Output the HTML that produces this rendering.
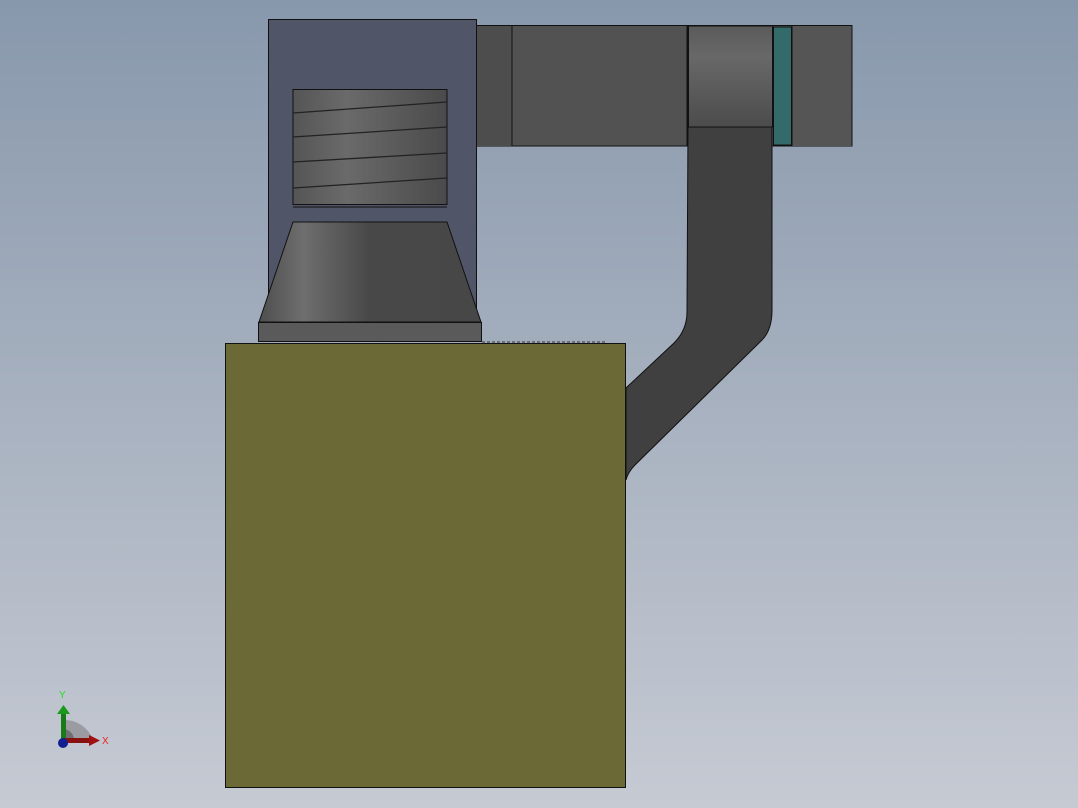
<!DOCTYPE html>
<html><head><style>
html,body{margin:0;padding:0;width:1078px;height:808px;overflow:hidden}
body{background:linear-gradient(#8898ac,#c6cad3)}
</style></head><body>
<svg width="1078" height="808" viewBox="0 0 1078 808" xmlns="http://www.w3.org/2000/svg" style="position:absolute;left:0;top:0">
<defs>
<linearGradient id="coil" x1="0" x2="1"><stop offset="0" stop-color="#555"/><stop offset="0.35" stop-color="#6a6a6a"/><stop offset="1" stop-color="#4a4a4a"/></linearGradient>
<linearGradient id="cyl" x1="0" y1="0" x2="0" y2="1"><stop offset="0" stop-color="#5a5a5a"/><stop offset="0.3" stop-color="#686868"/><stop offset="1" stop-color="#4c4c4c"/></linearGradient>
<linearGradient id="frus" x1="0" x2="1"><stop offset="0" stop-color="#4e4e4e"/><stop offset="0.2" stop-color="#6e6e6e"/><stop offset="0.5" stop-color="#484848"/><stop offset="1" stop-color="#474747"/></linearGradient>
</defs>
<!-- housing -->
<rect x="268.5" y="19.5" width="208" height="322" fill="#515568" stroke="#111"/>
<!-- horizontal duct -->
<rect x="477" y="25.5" width="375" height="120.5" fill="#525252" stroke="#111"/>
<rect x="477" y="26" width="35" height="120" fill="#4d4d4d"/>
<line x1="512" y1="26" x2="512" y2="146" stroke="#111"/>
<line x1="687.5" y1="26" x2="687.5" y2="146" stroke="#111" stroke-width="2"/>
<!-- vertical pipe -->
<path d="M688 127 L772 127 L772 310 Q772 330 762 340 L635 465 Q628 472 626 480 L626 388 L674 343 Q687 330 687 312 Z" fill="#404040" stroke="#111"/>
<rect x="688.5" y="26" width="84" height="101" fill="url(#cyl)" stroke="#111"/>
<rect x="773.5" y="27" width="18" height="118" fill="#336a6a" stroke="#111"/>
<rect x="792" y="26" width="60" height="120" fill="#555"/>
<line x1="852" y1="25" x2="852" y2="146" stroke="#111"/>
<line x1="792" y1="26" x2="792" y2="146" stroke="#111"/>
<!-- coil -->
<rect x="293" y="89.5" width="154" height="115" fill="url(#coil)" stroke="#111"/>
<g stroke="#222" stroke-width="1.3" fill="none">
<path d="M293 113 L447 102"/><path d="M293 137 L447 127"/><path d="M293 162 L447 153"/><path d="M293 188 L447 178"/>
</g>
<line x1="293" y1="207" x2="447" y2="207" stroke="#111"/>
<!-- frustum -->
<path d="M293 222 L447 222 L481 322 L259 322 Z" fill="url(#frus)" stroke="#111"/>
<rect x="258.5" y="322.5" width="223" height="19" fill="#5a5a5a" stroke="#111"/>
<line x1="482" y1="342" x2="605" y2="342" stroke="#333" stroke-dasharray="3 2"/>
<!-- box -->
<rect x="225.5" y="343.5" width="400" height="444" fill="#6b6a36" stroke="#111"/>
<!-- axis triad -->
<path d="M63 740 L63 720 A30 30 0 0 1 93 740 Z" fill="#9a9ca2"/>
<path d="M63 740 L63 729 A11 11 0 0 1 74 740 Z" fill="#6d6f74"/>
<rect x="61" y="712" width="5" height="28" fill="#1a7a1a"/>
<path d="M57 714 L63.5 705 L70 714 Z" fill="#1a9a1a"/>
<rect x="63" y="738" width="28" height="5" fill="#8a1010"/>
<path d="M89 735 L100 740.5 L89 746 Z" fill="#a01010"/>
<circle cx="63" cy="743" r="5" fill="#102090"/>
<text x="59" y="698" font-family="Liberation Sans, sans-serif" font-size="10" fill="#22dd22">Y</text>
<text x="102" y="744" font-family="Liberation Sans, sans-serif" font-size="10" fill="#ee2222">X</text>
</svg>
</body></html>
